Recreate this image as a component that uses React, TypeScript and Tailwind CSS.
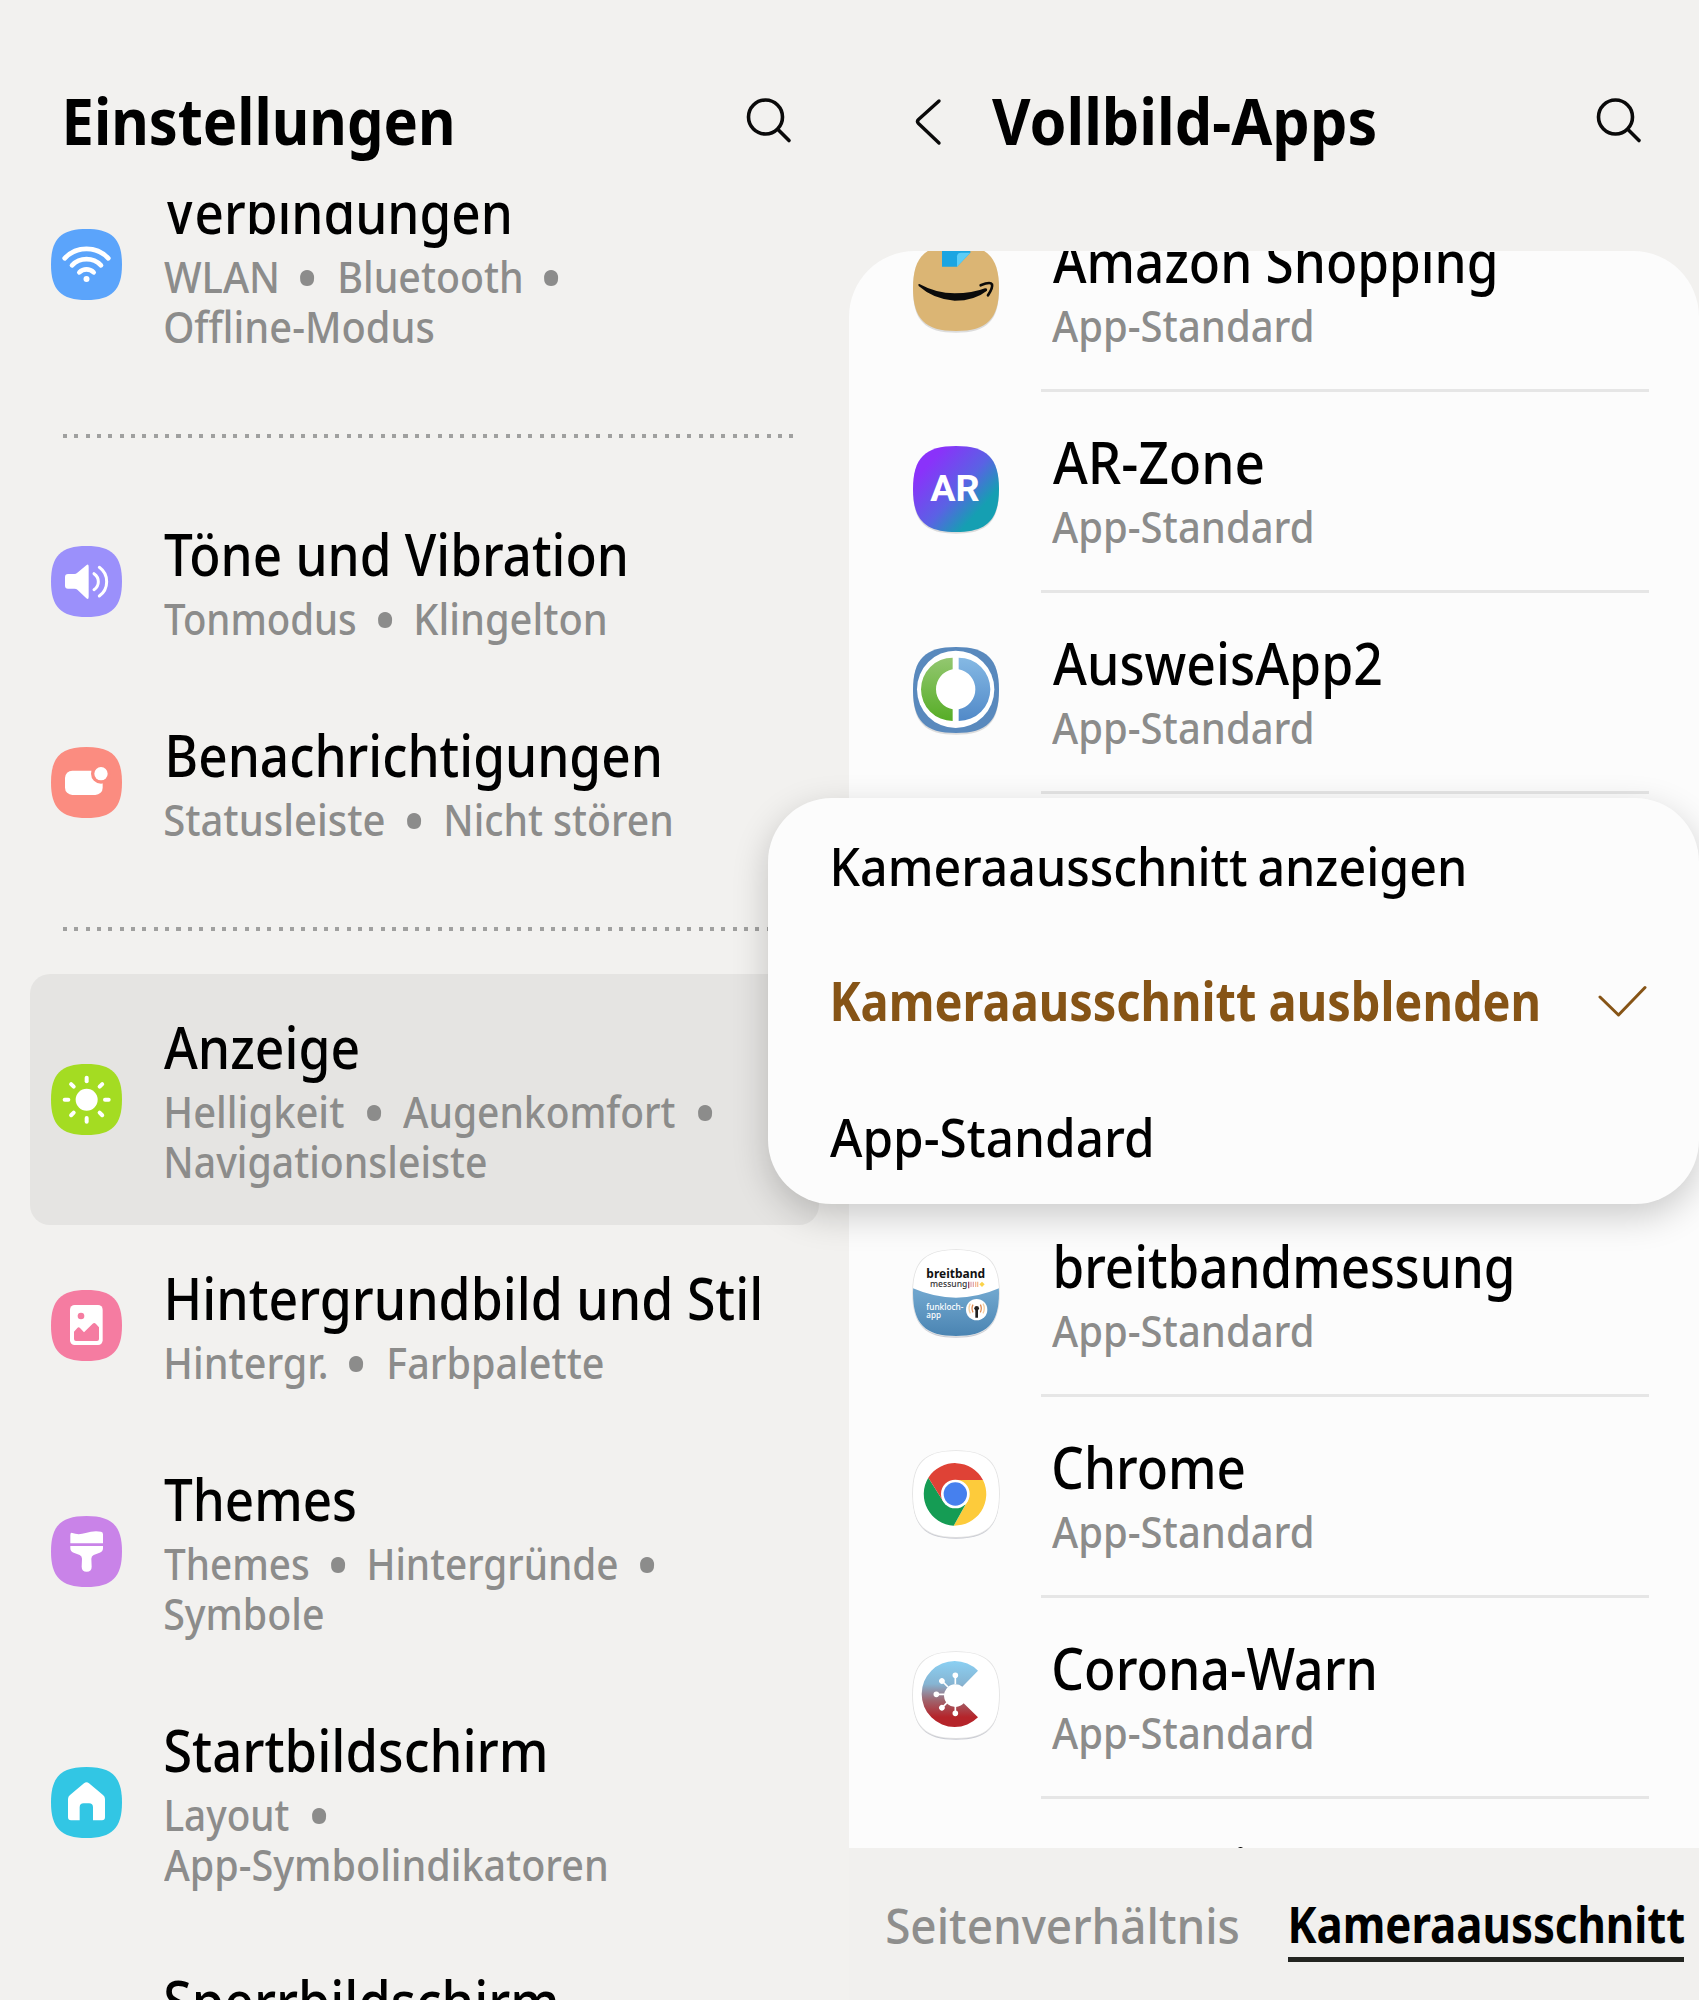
import { useLayoutEffect, useRef, useState, type ReactNode } from "react";

const SQUIRCLE = "M50 0C86 0 100 14 100 50S86 100 50 100 0 86 0 50 14 0 50 0Z";

// Single line of text squeezed so that its ink fills w pixels
function Fit({ w, className = "", children }: { w: number; className?: string; children: string }) {
  const ref = useRef<HTMLSpanElement>(null);
  const [fit, setFit] = useState({ left: 0, scale: 0.9 });

  useLayoutEffect(() => {
    const cs = getComputedStyle(ref.current!);
    const ctx = document.createElement("canvas").getContext("2d")!;
    ctx.font = `${cs.fontWeight} ${cs.fontSize} ${cs.fontFamily}`;
    const m = ctx.measureText(children);
    const left = -m.actualBoundingBoxLeft;
    const scale = w / (m.actualBoundingBoxRight - left);
    setFit({ left: left * scale, scale });
  }, [w, children]);

  return (
    <span className={`block shrink-0 whitespace-nowrap ${className}`} style={{ width: w }}>
      <span
        ref={ref}
        className="inline-block origin-left"
        style={{ transform: `translateX(${-fit.left}px) scaleX(${fit.scale})` }}
      >
        {children}
      </span>
    </span>
  );
}

function Tile({ color, children }: { color: string; children: ReactNode }) {
  return (
    <svg viewBox="0 0 213 213" className="size-[71px] shrink-0" fill="#fff">
      <path d={SQUIRCLE} fill={color} transform="scale(2.13)" />
      {children}
    </svg>
  );
}

const WifiIcon = (
  <Tile color="#5ba4fb">
    <g fill="none" stroke="#fff" strokeWidth="14" strokeLinecap="round">
      <path d="M41 88A90 90 0 0 1 172 88" />
      <path d="M63 109A60 60 0 0 1 150 109" />
      <path d="M85 130A31 31 0 0 1 128 130" />
    </g>
    <circle cx="106.500" cy="150" r="9" />
  </Tile>
);

const SoundIcon = (
  <Tile color="#9b90fb">
    <path d="M51 84H70Q75 84 79 80L106 57.500Q113 52 113 62V152Q113 163 106 157L80 132Q76 128 70 128H51Q42 128 42 119V93Q42 84 51 84Z" />
    <g fill="none" stroke="#fff" strokeWidth="9" strokeLinecap="round">
      <path d="M129 83Q142 92 142 107T129 131" />
      <path d="M145 64Q167 80 167 107T145 150" />
    </g>
  </Tile>
);

const NotificationIcon = (
  <Tile color="#fb8c80">
    <rect x="42" y="71" width="113" height="73" rx="22" />
    <circle cx="150" cy="80" r="30" fill="#fb8c80" />
    <circle cx="150" cy="80" r="20" />
  </Tile>
);

const SunIcon = (
  <Tile color="#a4dc22">
    <circle cx="107" cy="107" r="33" />
    <g stroke="#fff" strokeWidth="12" strokeLinecap="round">
      {[0, 45, 90, 135, 180, 225, 270, 315].map((a) => (
        <path key={a} d="M107 41V52" transform={`rotate(${a} 107 107)`} />
      ))}
    </g>
  </Tile>
);

const WallpaperIcon = (
  <Tile color="#f57ca1">
    <rect x="57" y="45" width="98" height="120" rx="14" />
    <circle cx="90" cy="78" r="10" fill="#f57ca1" />
    <path
      d="M69 125L79 114Q83 110 87 114L99 127 125 101Q130 96 135 102L144 112V147Q144 153 138 153H75Q69 153 69 147Z"
      fill="#f57ca1"
    />
  </Tile>
);

const BrushIcon = (
  <Tile color="#c983e8">
    <path d="M58 57Q58 49 64 51 82 58 104 51 128 43 150 47 156 48 156 55V82H58Z" />
    <path d="M58 90H156V97Q156 107 146 110L128 117Q121 120 121 128L122 152Q122 167 107 167T92 152L93 128Q93 120 86 117L68 110Q58 107 58 97Z" />
  </Tile>
);

const HomeIcon = (
  <Tile color="#32c6e4">
    <path d="M99 49Q106.500 43 114 49L156 84Q162 89 162 96V151Q162 160 153 160H126V121Q126 109 114 109H98Q86 109 86 121V160H60Q51 160 51 151V96Q51 89 57 84Z" />
  </Tile>
);

// text, width, left offset
type Text = [string, number, number?];
type Line = { words: Text[]; trailing?: boolean };
type Setting = { icon: ReactNode; title: Text; lines: Line[]; active?: boolean };

const groups: Setting[][] = [
  [
    {
      icon: WifiIcon,
      title: ["Verbindungen", 345],
      lines: [
        { words: [["WLAN", 113], ["Bluetooth", 180, 4]], trailing: true },
        { words: [["Offline-Modus", 268, 1]] },
      ],
    },
  ],
  [
    {
      icon: SoundIcon,
      title: ["Töne und Vibration", 461],
      lines: [{ words: [["Tonmodus", 191], ["Klingelton", 188, 2]] }],
    },
    {
      icon: NotificationIcon,
      title: ["Benachrichtigungen", 490, 4.5],
      lines: [{ words: [["Statusleiste", 219, 1], ["Nicht stören", 224, 3]] }],
    },
  ],
  [
    {
      icon: SunIcon,
      title: ["Anzeige", 194],
      lines: [
        { words: [["Helligkeit", 177, 3], ["Augenkomfort", 272, -1]], trailing: true },
        { words: [["Navigationsleiste", 319, 3]] },
      ],
      active: true,
    },
    {
      icon: WallpaperIcon,
      title: ["Hintergrundbild und Stil", 591, 4],
      lines: [{ words: [["Hintergr.", 159, 3], ["Farbpalette", 213, 3.5]] }],
    },
    {
      icon: BrushIcon,
      title: ["Themes", 191],
      lines: [
        { words: [["Themes", 144], ["Hintergründe", 247, 2]], trailing: true },
        { words: [["Symbole", 158, 1]] },
      ],
    },
    {
      icon: HomeIcon,
      title: ["Startbildschirm", 380, 1],
      lines: [{ words: [["Layout", 122, 3]], trailing: true }, { words: [["App-Symbolindikatoren", 442]] }],
    },
    { icon: null, title: ["Sperrbildschirm", 391, 1], lines: [] },
  ],
];

function Word({ word }: { word: Text }) {
  return (
    <div style={{ marginLeft: word[2] ?? 0 }}>
      <Fit w={word[1]}>{word[0]}</Fit>
    </div>
  );
}

function Bullet() {
  return <span className="w-[60px] text-center text-[63px] font-normal">•</span>;
}

function SettingRow({ item }: { item: Setting }) {
  return (
    <div className={`ml-[30px] flex w-[789px] items-center gap-[42px] rounded-[20px] pl-[21px] ${item.active ? "bg-[#e5e4e2]" : ""}`}>
      {item.icon ?? <div className="w-[71px]" />}
      <div className="pt-[33px] pb-[38px]">
        <div className="flex text-[58px] leading-[80px] text-black">
          <Word word={item.title} />
        </div>
        {item.lines.map((line, i) => (
          <div key={i} className="flex h-[50px] items-center text-[43px] leading-[50px] text-[#8c8c8b]">
            {line.words.map((word, j) => (
              <div key={j} className="flex items-center">
                {j > 0 && <Bullet />}
                <Word word={word} />
              </div>
            ))}
            {line.trailing && <Bullet />}
          </div>
        ))}
      </div>
    </div>
  );
}

function DottedLine() {
  return (
    <div className="flex h-[91px] items-center pl-[63px]">
      <div className="h-[4px] w-[732px] bg-[repeating-linear-gradient(90deg,#a0a09f_0_4px,transparent_4px_11.35px)]" />
    </div>
  );
}

function SearchIcon() {
  return (
    <svg viewBox="0 0 46 46" className="size-[46px]" fill="none" stroke="#0a0a0a" strokeWidth="3.6" strokeLinecap="round">
      <circle cx="19.500" cy="19" r="17" />
      <path d="M32 31.500L43 42.500" />
    </svg>
  );
}

function AppTile({ fill, shadow, children }: { fill: string; shadow?: boolean; children: ReactNode }) {
  return (
    <svg viewBox="0 0 258 258" className="size-[86px] shrink-0 overflow-visible">
      <defs>
        <linearGradient id="ar" x1="0" y1="0" x2="1" y2=".9">
          <stop offset=".2" stopColor="#8a32fa" />
          <stop offset=".55" stopColor="#5a62e4" />
          <stop offset=".8" stopColor="#159fb2" />
        </linearGradient>
        <linearGradient id="green" x1="0" y1="0" x2="0" y2="1">
          <stop offset="0" stopColor="#93c770" />
          <stop offset="1" stopColor="#56ad26" />
        </linearGradient>
        <linearGradient id="blue" x1="0" y1="0" x2="0" y2="1">
          <stop offset="0" stopColor="#85b9e4" />
          <stop offset="1" stopColor="#5189c8" />
        </linearGradient>
        <linearGradient id="corona" x1="0" y1="0" x2="0" y2="1">
          <stop offset="0" stopColor="#8bd0f3" />
          <stop offset=".35" stopColor="#86b4d2" />
          <stop offset=".6" stopColor="#a0636c" />
          <stop offset=".85" stopColor="#b5242a" />
        </linearGradient>
        <linearGradient id="sea" x1="0" y1="0" x2="0" y2="1">
          <stop offset=".1" stopColor="#6fa5cd" />
          <stop offset="1" stopColor="#4a84b2" />
        </linearGradient>
        <clipPath id="squircle">
          <path d={SQUIRCLE} transform="scale(2.58)" />
        </clipPath>
      </defs>
      <path d={SQUIRCLE} transform="translate(0 5) scale(2.58)" fill={shadow ? "#c9cbd3" : "#dcdcdc"} />
      {shadow && <path d={SQUIRCLE} transform="scale(2.58)" fill="none" stroke="#e2e2e2" strokeWidth="2" />}
      <g clipPath="url(#squircle)">
        <rect width="258" height="258" fill={fill} />
        {children}
      </g>
    </svg>
  );
}

const AmazonIcon = (
  <AppTile fill="#dbb574">
    <path d="M87 0H172V23L132 65H87Z" fill="#1ba5e2" />
    <path d="M132 65V34Q133 23 144 23H172Z" fill="#5ccdf6" />
    <path d="M19 117Q70 145 125 145 178 145 216 130 224 129 222 137 185 167 125 167 62 163 17 123 14 116 19 117Z" fill="#0b0b0b" />
    <path d="M203 121Q232 109 237 118 240 128 225 151" fill="none" stroke="#0b0b0b" strokeWidth="8" strokeLinecap="round" />
  </AppTile>
);

const ArIcon = (
  <AppTile fill="url(#ar)">
    <text x="52" y="164" textLength="148" lengthAdjust="spacingAndGlyphs" fontFamily="Roboto, sans-serif" fontWeight="700" fontSize="113" fill="#fff">
      AR
    </text>
  </AppTile>
);

const AusweisIcon = (
  <AppTile fill="#5989bd">
    <circle cx="128" cy="127" r="116" fill="#fff" />
    <path d="M119 32A95 95 0 0 0 119 222V187A61 61 0 0 1 119 67Z" fill="url(#green)" />
    <path d="M137 32A95 95 0 0 1 137 222V187A61 61 0 0 0 137 67Z" fill="url(#blue)" />
  </AppTile>
);

const BreitbandIcon = (
  <AppTile fill="#fff" shadow>
    <path d="M0 115Q64 143 129 143T258 115V258H0Z" fill="url(#sea)" />
    <g fontFamily="'Noto Sans', sans-serif">
      <text x="40" y="84" textLength="176" lengthAdjust="spacingAndGlyphs" fontWeight="700" fontSize="37" fill="#111">breitband</text>
      <text x="51" y="110" textLength="112" lengthAdjust="spacingAndGlyphs" fontWeight="500" fontSize="27" fill="#333">messung</text>
      <text x="40" y="179" textLength="111" lengthAdjust="spacingAndGlyphs" fontWeight="500" fontSize="26" fill="#fff">funkloch-</text>
      <text x="40" y="204" textLength="44" lengthAdjust="spacingAndGlyphs" fontWeight="500" fontSize="26" fill="#fff">app</text>
    </g>
    <path d="M167 95V115" stroke="#a05068" strokeWidth="4" />
    <path d="M174 95V111M181 95V111" stroke="#e0a8b0" strokeWidth="4" />
    <path d="M188 95V111M194 95V111" stroke="#f3b890" strokeWidth="4" />
    <path d="M207 95L215 103 207 111 199 103Z" fill="#fbd34a" />
    <circle cx="191" cy="179" r="32" fill="#fff" />
    <g fill="none" strokeWidth="4">
      <path d="M180 164Q174 175 180 187M202 164Q208 175 202 187" stroke="#e08a50" />
      <path d="M172 161Q164 175 172 190M210 161Q218 175 210 190" stroke="#f5cfa0" />
    </g>
    <circle cx="191" cy="175" r="7" fill="#222" />
    <path d="M191 172V203" stroke="#222" strokeWidth="8" />
  </AppTile>
);

const ChromeIcon = (
  <AppTile fill="#fff" shadow>
    <path d="M127 87H210A95 95 0 0 1 122 224L164 150Z" fill="#fdcb3b" />
    <path d="M46 80L90 150 127 171 158 160 122 224A95 95 0 0 1 46 80Z" fill="#159c54" />
    <path d="M46 80A95 95 0 0 1 210 87H127L90 150Z" fill="#df4236" />
    <circle cx="127" cy="129" r="43" fill="#fff" />
    <circle cx="127" cy="129" r="35" fill="#4680ee" />
  </AppTile>
);

const CoronaIcon = (
  <AppTile fill="#fff" shadow>
    <path d="M195 56A99 99 0 1 0 195 196L152 154A34 34 0 1 1 148 104Z" fill="url(#corona)" />
    <g stroke="#fff" strokeWidth="5" fill="#fff">
      {[0, -45, -90, -135, -180].map((a) => (
        <g key={a} transform={`rotate(${a} 127 127)`}>
          <path d="M127 72V96" />
          <circle cx="127" cy="70" r="6" />
        </g>
      ))}
    </g>
  </AppTile>
);

type AppEntry = { icon: ReactNode; title: Text };

const appsAbove: AppEntry[] = [
  { icon: AmazonIcon, title: ["Amazon Shopping", 442] },
  { icon: ArIcon, title: ["AR-Zone", 210] },
  { icon: AusweisIcon, title: ["AusweisApp2", 328] },
];

const appsBelow: AppEntry[] = [
  { icon: BreitbandIcon, title: ["breitbandmessung", 456, 3] },
  { icon: ChromeIcon, title: ["Chrome", 190, 1] },
  { icon: CoronaIcon, title: ["Corona-Warn", 320, 1] },
];

function AppRow({ icon, title }: AppEntry) {
  return (
    <div className="flex h-[201px] gap-[54px] pl-[64px]">
      <div className="w-[86px] shrink-0 pt-[54px]">{icon}</div>
      <div className="-ml-[12px] w-[608px] border-b-[3px] border-[#e6e6e6] pt-[30px] pl-[12px]">
        <div className="flex text-[58px] leading-[79px] text-black">
          <Word word={title} />
        </div>
        <Fit w={260} className="-ml-px pt-px text-[43px] leading-[50px] text-[#8c8c8b]">App-Standard</Fit>
      </div>
    </div>
  );
}

export default function App() {
  return (
    <div className="relative flex h-[2000px] w-[1699px] overflow-hidden bg-[#f2f1ef] font-['Noto_Sans',sans-serif] font-medium">
      <section className="w-[849px] shrink-0">
        <header className="flex h-[202px] items-start justify-between pt-[80px] pr-[57px] pl-[66px]">
          <Fit w={386} className="text-[64.500px] leading-[80px] font-bold text-black">Einstellungen</Fit>
          <div className="pt-[18px]">
            <SearchIcon />
          </div>
        </header>
        <div className="h-[1798px] overflow-hidden">
          <div className="-mt-[63px]">
            {groups.map((group, i) => (
              <div key={i}>
                {i > 0 && <DottedLine />}
                {group.map((item) => (
                  <SettingRow key={item.title[0]} item={item} />
                ))}
              </div>
            ))}
          </div>
        </div>
      </section>

      <section className="flex w-[850px] shrink-0 flex-col">
        <header className="flex h-[251px] items-start pt-[80px] pl-[64px]">
          <svg viewBox="0 0 30 50" className="mt-[17px] h-[50px] w-[30px]" fill="none" stroke="#0a0a0a" strokeWidth="3.4" strokeLinecap="round" strokeLinejoin="round">
            <path d="M26 4L5.500 22.500Q3.500 24.500 5.500 26.500L26 46" />
          </svg>
          <Fit w={383} className="ml-[49px] text-[64.500px] leading-[80px] font-bold text-black">Vollbild-Apps</Fit>
          <div className="ml-auto pt-[18px] pr-[57px]">
            <SearchIcon />
          </div>
        </header>
        <div className="h-[1597px] shrink-0 overflow-hidden rounded-t-[66px] bg-[#fcfcfc]">
          <div className="-mt-[60px]">
            {appsAbove.map((app) => (
              <AppRow key={app.title[0]} {...app} />
            ))}
            {/* two rows sit behind the open menu */}
            <div className="h-[402px]" />
            {appsBelow.map((app) => (
              <AppRow key={app.title[0]} {...app} />
            ))}
            <AppRow icon={null} title={["DB Navigator", 326, 3]} />
          </div>
        </div>
        <nav className="flex h-[152px] items-start gap-[50px] bg-[#f1f0ee] pt-[43px] pl-[38px]">
          <Fit w={351} className="pt-px text-[49.500px] leading-[66px] text-[#8e8e8d]">Seitenverhältnis</Fit>
          <div className="border-b-[5px] border-[#232521] pl-[3px]">
            <Fit w={393} className="text-[49.500px] leading-[66px] font-bold text-black">Kameraausschnitt</Fit>
          </div>
        </nav>
      </section>

      <div className="absolute top-[798px] left-[768px] w-[931px] rounded-[64px] bg-[#fcfcfc] pl-[64px] text-[53px] leading-[135.4px] text-black shadow-[0_12px_36px_rgba(0,0,0,0.2)]">
        <Fit w={633} className="ml-[2px] [word-spacing:-3px]">Kameraausschnitt anzeigen</Fit>
        <div className="flex items-center text-[#865416]">
          <Fit w={705} className="ml-px font-bold">Kameraausschnitt ausblenden</Fit>
          <svg viewBox="0 0 50 32" className="ml-[60px] h-[32px] w-[50px]" fill="none" stroke="#865416" strokeWidth="3" strokeLinecap="round" strokeLinejoin="round">
            <path d="M2 12L20.500 30 47 2.500" />
          </svg>
        </div>
        <Fit w={321} className="-ml-[2px]">App-Standard</Fit>
      </div>
    </div>
  );
}
